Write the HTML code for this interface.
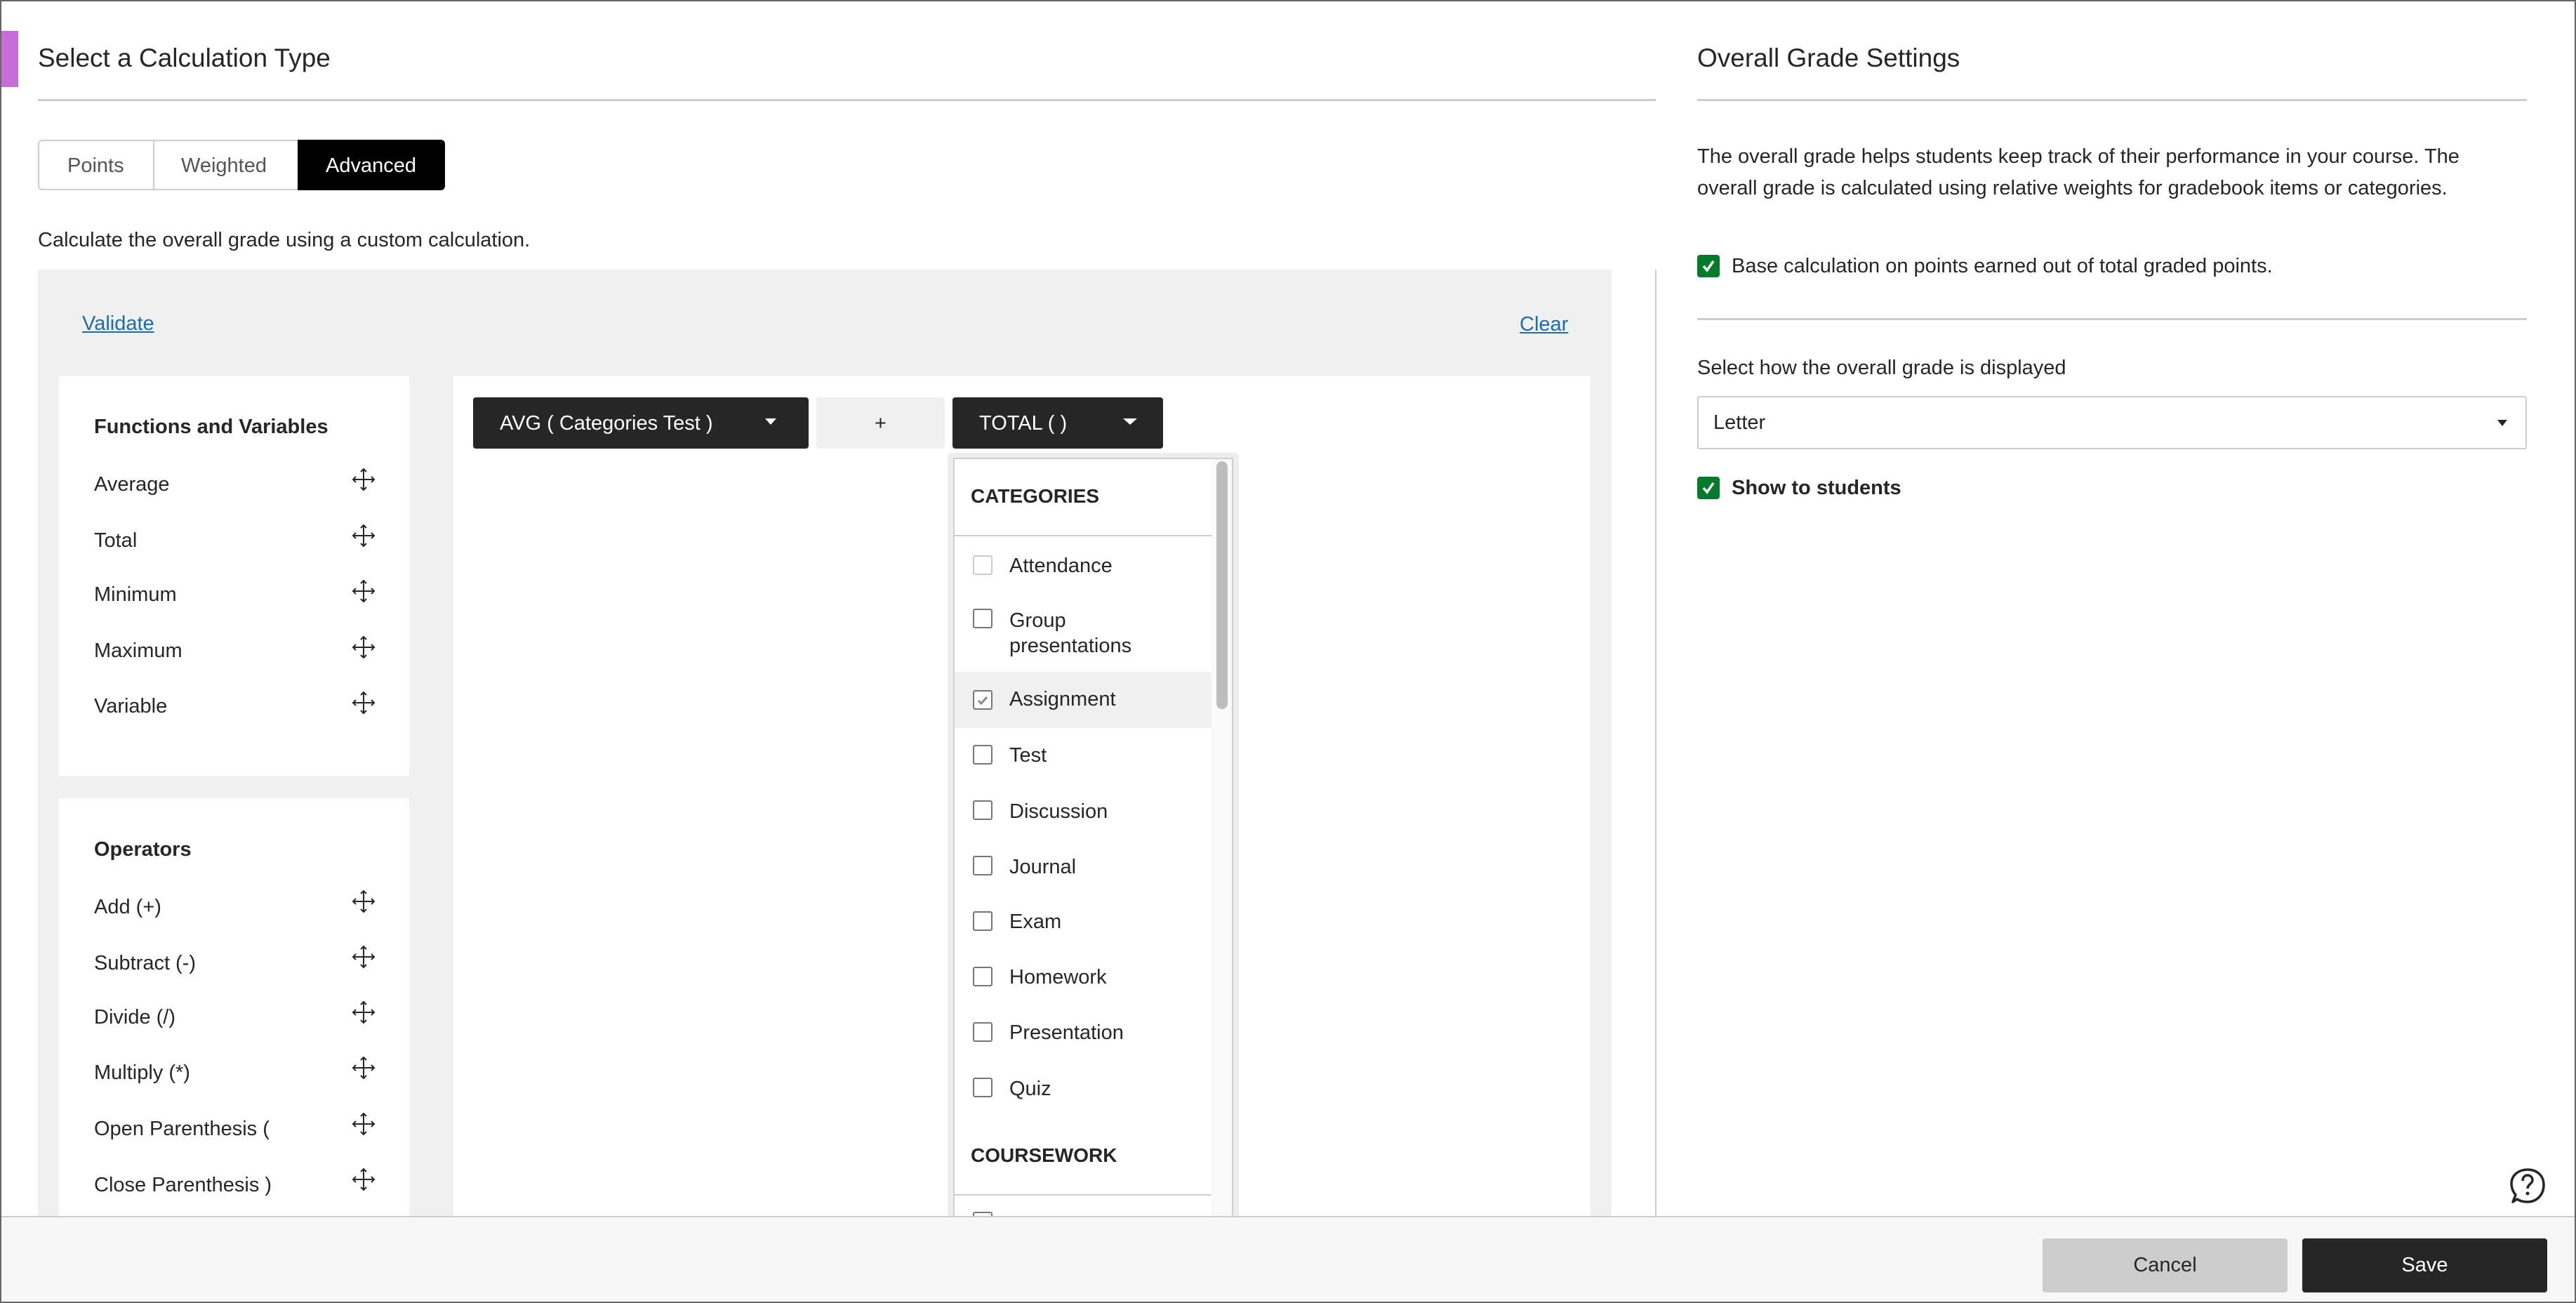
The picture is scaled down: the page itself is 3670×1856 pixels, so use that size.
<!DOCTYPE html>
<html><head><meta charset="utf-8"><style>
*{box-sizing:border-box;margin:0;padding:0}
body{width:3670px;height:1856px;position:relative;overflow:hidden;background:#fff;font-family:"Liberation Sans",sans-serif;color:#262626}
.a{position:absolute;white-space:nowrap}
.t30{font-size:29px}
.mv{position:absolute;width:36px;height:36px}
.cb{position:absolute;width:28px;height:28px;border:2px solid #767676;border-radius:3px;background:#fff}
.gc{position:absolute;width:32px;height:32px;background:#037b2b;border-radius:4px}
</style></head><body>
<div class="a" style="left:0;top:0;width:3670px;height:1856px;border:2px solid #666;z-index:50;pointer-events:none"></div>
<div class="a" style="left:0;top:44px;width:26px;height:80px;background:#c86dd7"></div>
<div class="a" style="left:54px;top:62px;font-size:37px">Select a Calculation Type</div>
<div class="a" style="left:54px;top:141px;width:2305px;height:3px;background:#cdcdcd"></div>
<div class="a" style="left:54px;top:199px;width:580px;height:72px;border:2px solid #cdcdcd;border-radius:6px"></div>
<div class="a" style="left:218px;top:199px;width:2px;height:72px;background:#cdcdcd"></div>
<div class="a" style="left:424px;top:199px;width:210px;height:72px;background:#000;border-radius:0 6px 6px 0"></div>
<div class="a t30" style="left:96px;top:220px;color:#555">Points</div>
<div class="a t30" style="left:258px;top:220px;color:#555">Weighted</div>
<div class="a t30" style="left:464px;top:220px;color:#fff">Advanced</div>
<div class="a t30" style="left:54px;top:326px">Calculate the overall grade using a custom calculation.</div>
<div class="a" style="left:54px;top:384px;width:2242px;height:1348px;background:#f0f0f0"></div>
<div class="a t30" style="left:117px;top:445px;color:#1b6ea8;text-decoration:underline">Validate</div>
<div class="a t30" style="left:2165px;top:446px;color:#1b6ea8;text-decoration:underline">Clear</div>
<div class="a" style="left:84px;top:536px;width:499px;height:569px;background:#fff"></div>
<div class="a" style="left:84px;top:1137px;width:499px;height:600px;background:#fff"></div>
<div class="a t30" style="left:134px;top:592px;font-weight:bold">Functions and Variables</div>
<div class="a t30" style="left:134px;top:674px">Average</div>
<div class="a t30" style="left:134px;top:754px">Total</div>
<div class="a t30" style="left:134px;top:831px">Minimum</div>
<div class="a t30" style="left:134px;top:911px">Maximum</div>
<div class="a t30" style="left:134px;top:990px">Variable</div>
<div class="a t30" style="left:134px;top:1194px;font-weight:bold">Operators</div>
<div class="a t30" style="left:134px;top:1276px">Add (+)</div>
<div class="a t30" style="left:134px;top:1356px">Subtract (-)</div>
<div class="a t30" style="left:134px;top:1433px">Divide (/)</div>
<div class="a t30" style="left:134px;top:1512px">Multiply (*)</div>
<div class="a t30" style="left:134px;top:1592px">Open Parenthesis (</div>
<div class="a t30" style="left:134px;top:1672px">Close Parenthesis )</div>
<svg width="0" height="0" style="position:absolute"><defs><symbol id="mv" viewBox="0 0 36 36"><path d="M18 3V33M3 18H33M14 7L18 3L22 7M14 29L18 33L22 29M7 14L3 18L7 22M29 14L33 18L29 22" fill="none" stroke="#262626" stroke-width="2"/></symbol></defs></svg>
<svg class="mv" style="left:500px;top:665px"><use href="#mv"/></svg>
<svg class="mv" style="left:500px;top:745px"><use href="#mv"/></svg>
<svg class="mv" style="left:500px;top:824px"><use href="#mv"/></svg>
<svg class="mv" style="left:500px;top:904px"><use href="#mv"/></svg>
<svg class="mv" style="left:500px;top:983px"><use href="#mv"/></svg>
<svg class="mv" style="left:500px;top:1266px"><use href="#mv"/></svg>
<svg class="mv" style="left:500px;top:1345px"><use href="#mv"/></svg>
<svg class="mv" style="left:500px;top:1424px"><use href="#mv"/></svg>
<svg class="mv" style="left:500px;top:1503px"><use href="#mv"/></svg>
<svg class="mv" style="left:500px;top:1583px"><use href="#mv"/></svg>
<svg class="mv" style="left:500px;top:1662px"><use href="#mv"/></svg>
<div class="a" style="left:646px;top:536px;width:1620px;height:1200px;background:#fff"></div>
<div class="a" style="left:674px;top:566px;width:478px;height:73px;background:#262626;border-radius:4px"></div>
<div class="a t30" style="left:712px;top:587px;color:#fff">AVG ( Categories Test )</div>
<div class="a" style="left:1090px;top:596px;border:8px solid transparent;border-top:9px solid #fff"></div>
<div class="a" style="left:1163px;top:566px;width:183px;height:73px;background:#f0f0f0;border-radius:4px"></div>
<div class="a t30" style="left:1246px;top:587px">+</div>
<div class="a" style="left:1357px;top:566px;width:300px;height:73px;background:#262626;border-radius:4px"></div>
<div class="a t30" style="left:1395px;top:587px;color:#fff">TOTAL ( )</div>
<div class="a" style="left:1600px;top:596px;border:10px solid transparent;border-top:9px solid #fff"></div>
<div class="a" style="left:1350px;top:645px;width:415px;height:1100px;background:#ededed;border-radius:6px"></div>
<div class="a" style="left:1358px;top:652px;width:399px;height:1100px;background:#fafafa;border:2px solid #cfcfcf"></div>
<div class="a" style="left:1360px;top:654px;width:366px;height:1100px;background:#fff"></div>
<div class="a" style="left:1733px;top:657px;width:16px;height:353px;background:#bdbdbd;border-radius:8px"></div>
<div class="a" style="left:1383px;top:691px;font-size:28px;font-weight:bold">CATEGORIES</div>
<div class="a" style="left:1360px;top:762px;width:366px;height:2px;background:#cdcdcd"></div>
<div class="a" style="left:1360px;top:957px;width:366px;height:80px;background:#f0f0f0"></div>
<div class="cb" style="left:1386px;top:791px;border-color:#ccc"></div>
<div class="a t30" style="left:1438px;top:790px">Attendance</div>
<div class="cb" style="left:1386px;top:867px"></div>
<div class="a t30" style="left:1438px;top:866px;line-height:36px">Group<br>presentations</div>
<div class="cb" style="left:1386px;top:983px"><svg width="24" height="24" style="position:absolute;left:0;top:0"><path d="M6 13L10 17L18 8" fill="none" stroke="#888" stroke-width="3"/></svg></div>
<div class="a t30" style="left:1438px;top:980px">Assignment</div>
<div class="cb" style="left:1386px;top:1061px"></div><div class="a t30" style="left:1438px;top:1060px">Test</div>
<div class="cb" style="left:1386px;top:1140px"></div><div class="a t30" style="left:1438px;top:1140px">Discussion</div>
<div class="cb" style="left:1386px;top:1219px"></div><div class="a t30" style="left:1438px;top:1219px">Journal</div>
<div class="cb" style="left:1386px;top:1298px"></div><div class="a t30" style="left:1438px;top:1297px">Exam</div>
<div class="cb" style="left:1386px;top:1377px"></div><div class="a t30" style="left:1438px;top:1376px">Homework</div>
<div class="cb" style="left:1386px;top:1456px"></div><div class="a t30" style="left:1438px;top:1455px">Presentation</div>
<div class="cb" style="left:1386px;top:1535px"></div><div class="a t30" style="left:1438px;top:1535px">Quiz</div>
<div class="a" style="left:1383px;top:1630px;font-size:28px;font-weight:bold">COURSEWORK</div>
<div class="a" style="left:1360px;top:1701px;width:366px;height:2px;background:#cdcdcd"></div>
<div class="cb" style="left:1386px;top:1726px"></div>
<div class="a" style="left:2358px;top:384px;width:2px;height:1350px;background:#cdcdcd"></div>
<div class="a" style="left:2418px;top:62px;font-size:37px">Overall Grade Settings</div>
<div class="a" style="left:2418px;top:141px;width:1182px;height:3px;background:#cdcdcd"></div>
<div class="a t30" style="left:2418px;top:201px;line-height:45px">The overall grade helps students keep track of their performance in your course. The<br>overall grade is calculated using relative weights for gradebook items or categories.</div>
<div class="gc" style="left:2418px;top:363px"><svg width="32" height="32"><path d="M9 16L14 22L23 9" fill="none" stroke="#fff" stroke-width="3.5"/></svg></div>
<div class="a t30" style="left:2467px;top:363px">Base calculation on points earned out of total graded points.</div>
<div class="a" style="left:2418px;top:453px;width:1182px;height:3px;background:#cdcdcd"></div>
<div class="a t30" style="left:2418px;top:508px">Select how the overall grade is displayed</div>
<div class="a" style="left:2418px;top:564px;width:1182px;height:76px;border:2px solid #cdcdcd;border-radius:3px"></div>
<div class="a t30" style="left:2441px;top:586px">Letter</div>
<div class="a" style="left:3558px;top:598px;border:7px solid transparent;border-top:9px solid #262626"></div>
<div class="gc" style="left:2418px;top:679px"><svg width="32" height="32"><path d="M9 16L14 22L23 9" fill="none" stroke="#fff" stroke-width="3.5"/></svg></div>
<div class="a t30" style="left:2467px;top:679px;font-weight:bold">Show to students</div>
<svg class="a" style="left:3574px;top:1662px" width="54" height="56" viewBox="0 0 54 56"><path d="M6 50L10 40C5 34 4 28 4 24C4 12 14 4 27 4C40 4 50 12 50 26C50 40 40 50 27 50C20 50 15 48 12 46Z" fill="none" stroke="#262626" stroke-width="3.5" stroke-linejoin="round"/><path d="M20 20C20 14 24 12 27 12C31 12 34 15 34 19C34 24 27 25 27 31" fill="none" stroke="#262626" stroke-width="3.5"/><circle cx="27" cy="38" r="2.5" fill="#262626"/></svg>
<div class="a" style="left:0;top:1732px;width:3670px;height:124px;background:#f7f7f7;border-top:2px solid #cdcdcd"></div>
<div class="a" style="left:2910px;top:1764px;width:349px;height:77px;background:#cdcdcd;border-radius:4px"></div>
<div class="a t30" style="left:2910px;top:1786px;width:349px;text-align:center">Cancel</div>
<div class="a" style="left:3280px;top:1764px;width:349px;height:77px;background:#262626;border-radius:4px"></div>
<div class="a t30" style="left:3280px;top:1786px;width:349px;text-align:center;color:#fff">Save</div>
</body></html>
